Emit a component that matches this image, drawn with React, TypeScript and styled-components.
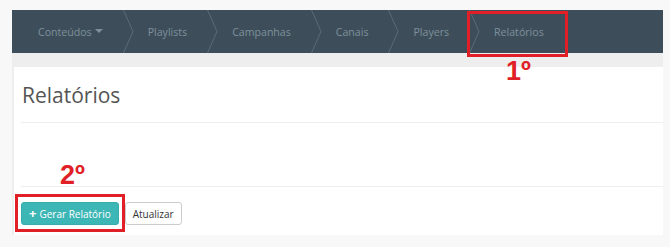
import React from 'react';
import styled, { createGlobalStyle } from 'styled-components';

const GlobalStyle = createGlobalStyle`
  html, body {
    margin: 0;
    padding: 0;
    background: #f8f8f8;
  }
  body {
    font-family: 'Open Sans', 'Noto Sans', Arial, sans-serif;
  }
`;

const Page = styled.div`
  position: relative;
  width: 651px;
  padding: 10px 0 0 12px;
`;

const NavBar = styled.nav`
  display: flex;
  align-items: stretch;
  height: 43px;
  background: #3d4e5a;
`;

const Crumb = styled.a<{ $first?: boolean }>`
  display: flex;
  align-items: center;
  padding: 0 20px 0 ${({ $first }) => ($first ? '26px' : '14px')};
  color: #7f909c;
  font-size: 10.6px;
  text-decoration: none;
  white-space: nowrap;
  cursor: pointer;
`;

const Caret = styled.span`
  display: inline-block;
  margin-left: 3px;
  width: 0;
  height: 0;
  border-left: 4px solid transparent;
  border-right: 4px solid transparent;
  border-top: 4px solid #7f909c;
  transform: translateY(-1px);
`;

const Separator = () => (
  <svg width="11" height="43" viewBox="0 0 11 43">
    <polyline points="0.5,0 10,21.5 0.5,43" fill="none" stroke="#5a6b77" strokeWidth="1" />
  </svg>
);

const Content = styled.div`
  background: #eeeeee;
  padding: 14px 0 0 2px;
`;

const Card = styled.section`
  background: #ffffff;
  height: 168px;
  padding: 0 0 0 7px;
  display: flex;
  flex-direction: column;
  box-sizing: border-box;
`;

const Header = styled.div`
  height: 55px;
  display: flex;
  align-items: center;
  border-bottom: 1px solid #eeeeee;
`;

const Title = styled.h1`
  margin: 0 0 0 1px;
  font-size: 21px;
  font-weight: 400;
  color: #555555;
`;

const Body = styled.div`
  height: 63px;
  border-bottom: 1px solid #eeeeee;
`;

const Footer = styled.div`
  display: flex;
  gap: 6px;
  padding-top: 15px;
`;

const Button = styled.button<{ $primary?: boolean }>`
  height: 23px;
  padding: 0 7px;
  border-radius: 3px;
  font-family: 'Open Sans', 'Noto Sans', Arial, sans-serif;
  font-size: 10px;
  cursor: pointer;
  display: flex;
  align-items: center;
  gap: 3px;
  border: 1px solid ${({ $primary }) => ($primary ? '#38adad' : '#cccccc')};
  background: ${({ $primary }) => ($primary ? '#3db6b6' : '#ffffff')};
  color: ${({ $primary }) => ($primary ? '#ffffff' : '#333333')};
`;

const Plus = styled.span`
  font-weight: 700;
  font-size: 13px;
  line-height: 1;
`;

const Mark = styled.div<{ $x: number; $y: number; $w: number; $h: number }>`
  position: absolute;
  left: ${({ $x }) => $x}px;
  top: ${({ $y }) => $y}px;
  width: ${({ $w }) => $w}px;
  height: ${({ $h }) => $h}px;
  border: 3px solid #e01f26;
  box-sizing: border-box;
  pointer-events: none;
`;

const Step = styled.span<{ $x: number; $y: number }>`
  position: absolute;
  left: ${({ $x }) => $x}px;
  top: ${({ $y }) => $y}px;
  font-family: 'Liberation Sans', Arial, sans-serif;
  font-weight: 700;
  font-size: 27px;
  line-height: 1;
  color: #e01f26;
`;

const crumbs = ['Playlists', 'Campanhas', 'Canais', 'Players', 'Relatórios'];

export default function App() {
  return (
    <>
      <GlobalStyle />
      <Page>
        <NavBar>
          <Crumb $first>
            Conteúdos
            <Caret />
          </Crumb>
          {crumbs.map((c) => (
            <React.Fragment key={c}>
              <Separator />
              <Crumb>{c}</Crumb>
            </React.Fragment>
          ))}
        </NavBar>
        <Content>
          <Card>
            <Header>
              <Title>Relatórios</Title>
            </Header>
            <Body />
            <Footer>
              <Button $primary>
                <Plus>+</Plus>Gerar Relatório
              </Button>
              <Button>Atualizar</Button>
            </Footer>
          </Card>
        </Content>
        <Mark $x={467} $y={11} $w={101} $h={46} />
        <Step $x={506} $y={58}>1º</Step>
        <Mark $x={15} $y={194} $w={110} $h={38} />
        <Step $x={60} $y={162}>2º</Step>
      </Page>
    </>
  );
}
